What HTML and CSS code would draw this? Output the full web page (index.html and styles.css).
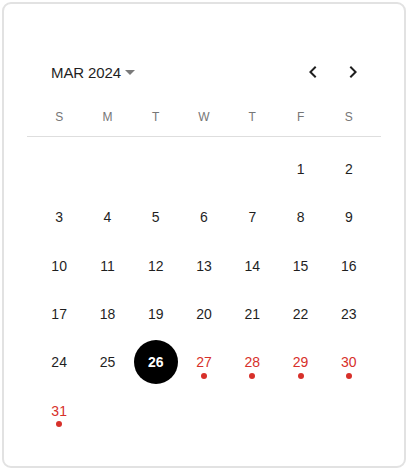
FILE: index.html
```html
<!DOCTYPE html>
<html>
<head>
<meta charset="utf-8">
<link rel="stylesheet" href="styles.css">
</head>
<body>
<div class="card">
  <div class="cal">
    <div class="header">
      <div class="month">MAR 2024<span class="caret"></span></div>
      <div class="navs">
        <button class="nav" aria-label="Previous month">
          <svg width="24" height="24" viewBox="0 0 24 24"><path d="M15.41 7.41 14 6l-6 6 6 6 1.41-1.41L10.83 12z" fill="#1f1f1f"/></svg>
        </button>
        <button class="nav" aria-label="Next month">
          <svg width="24" height="24" viewBox="0 0 24 24"><path d="M10 6 8.59 7.41 13.17 12l-4.58 4.59L10 18l6-6z" fill="#1f1f1f"/></svg>
        </button>
      </div>
    </div>
    <div class="weekdays">
      <span>S</span><span>M</span><span>T</span><span>W</span><span>T</span><span>F</span><span>S</span>
    </div>
    <div class="divider"></div>
    <div class="days">
      <span></span><span></span><span></span><span></span><span></span>
      <span class="day">1</span><span class="day">2</span>
      <span class="day">3</span><span class="day">4</span><span class="day">5</span><span class="day">6</span><span class="day">7</span><span class="day">8</span><span class="day">9</span>
      <span class="day">10</span><span class="day">11</span><span class="day">12</span><span class="day">13</span><span class="day">14</span><span class="day">15</span><span class="day">16</span>
      <span class="day">17</span><span class="day">18</span><span class="day">19</span><span class="day">20</span><span class="day">21</span><span class="day">22</span><span class="day">23</span>
      <span class="day">24</span><span class="day">25</span><span class="day selected"><b>26</b></span><span class="day event">27</span><span class="day event">28</span><span class="day event">29</span><span class="day event">30</span>
      <span class="day event">31</span>
    </div>
  </div>
</div>
</body>
</html>
```
FILE: styles.css
```css
html, body {
  margin: 0;
  padding: 0;
  background: #ffffff;
}
body {
  padding: 2px;
  font-family: "Liberation Sans", Arial, sans-serif;
  color: #1f1f1f;
}
.card {
  box-sizing: border-box;
  width: 404px;
  height: 466px;
  border: 2px solid #e2e2e2;
  border-radius: 9px;
  background: #fff;
  padding: 48px 23px 0 23px;
}
.cal {
  width: 354px;
}
.header {
  height: 40px;
  display: flex;
  align-items: center;
  justify-content: space-between;
  padding: 0 8px 0 24px;
}
.month {
  font-size: 15px;
  display: flex;
  align-items: center;
  letter-spacing: -0.1px;
}
.caret {
  display: inline-block;
  width: 0;
  height: 0;
  margin-left: 4px;
  margin-top: 1px;
  border-left: 5px solid transparent;
  border-right: 5px solid transparent;
  border-top: 5px solid #7a7a7a;
}
.navs {
  display: flex;
}
.nav {
  width: 40px;
  height: 40px;
  border: 0;
  padding: 0;
  background: none;
  display: flex;
  align-items: center;
  justify-content: center;
}
.weekdays {
  margin-top: 13px;
  height: 24px;
  padding: 0 8px;
  display: grid;
  grid-template-columns: repeat(7, 1fr);
  align-items: center;
  justify-items: center;
  font-size: 12px;
  color: #767676;
}
.divider {
  margin-top: 7px;
  height: 1px;
  background: #dedede;
}
.days {
  margin-top: 8px;
  padding: 0 8px;
  display: grid;
  grid-template-columns: repeat(7, 1fr);
  grid-auto-rows: 48.3px;
  font-size: 14px;
}
.day {
  position: relative;
  display: flex;
  align-items: center;
  justify-content: center;
}
.selected b {
  width: 44px;
  height: 44px;
  border-radius: 50%;
  background: #000;
  color: #fff;
  display: flex;
  align-items: center;
  justify-content: center;
  font-weight: bold;
  font-size: 14px;
}
.event {
  color: #d7302a;
}
.event::after {
  content: "";
  position: absolute;
  left: 50%;
  top: 35px;
  width: 6px;
  height: 6px;
  margin-left: -3px;
  border-radius: 50%;
  background: #d7302a;
}
```
